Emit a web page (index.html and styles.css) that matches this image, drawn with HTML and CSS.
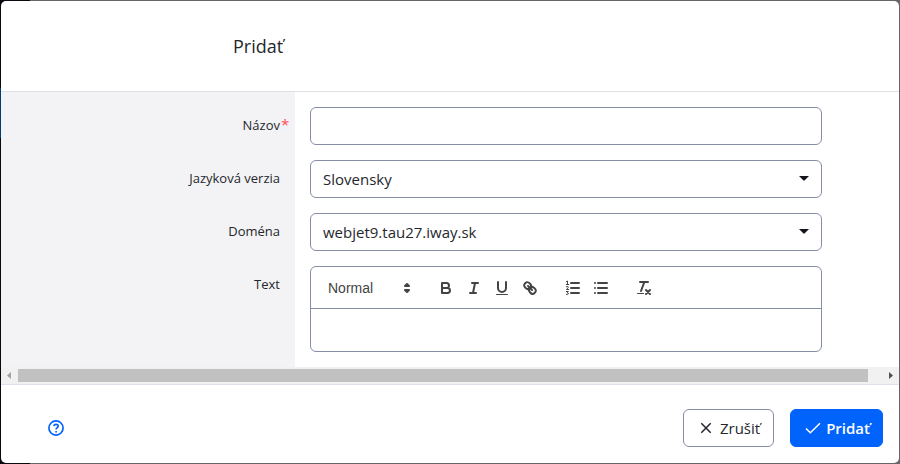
FILE: index.html
```html
<!DOCTYPE html>
<html lang="sk">
<head>
<meta charset="utf-8">
<title>Pridať</title>
<link rel="stylesheet" href="styles.css">
</head>
<body>
<form class="modal">
  <header class="modal-header"><h1>Pridať</h1></header>
  <div class="modal-body">
    <div class="row">
      <div class="label-cell"><label for="name">Názov<span class="required">*</span></label></div>
      <div class="field"><input class="control" id="name" type="text"></div>
    </div>
    <div class="row">
      <div class="label-cell"><label for="language">Jazyková verzia</label></div>
      <div class="field">
        <select class="control" id="language"><option>Slovensky</option></select>
        <svg class="caret" viewBox="0 0 10 5" aria-hidden="true"><path d="M0 0H10L6 4Q5 5 4 4Z"/></svg>
      </div>
    </div>
    <div class="row">
      <div class="label-cell"><label for="domain">Doména</label></div>
      <div class="field">
        <select class="control" id="domain"><option>webjet9.tau27.iway.sk</option></select>
        <svg class="caret" viewBox="0 0 10 5" aria-hidden="true"><path d="M0 0H10L6 4Q5 5 4 4Z"/></svg>
      </div>
    </div>
    <div class="row">
      <div class="label-cell"><label for="text">Text</label></div>
      <div class="field">
        <div class="editor">
          <div class="toolbar">
            <div class="picker">
              <select aria-label="Formát"><option>Normal</option></select>
              <svg class="icon" viewBox="0 0 18 18"><path class="solid" d="M7 11L9 13L11 11ZM7 7L9 5L11 7Z"/></svg>
            </div>
            <div class="group">
              <button type="button" aria-label="Tučné"><svg class="icon" viewBox="0 0 18 18"><path d="M5 4H9.5A2.5 2.5 0 0 1 9.5 9H5ZM5 9H10.5A2.5 2.5 0 0 1 10.5 14H5Z"/></svg></button>
              <button type="button" aria-label="Kurzíva"><svg class="icon" viewBox="0 0 18 18"><path d="M7 4H13M5 14H11M8 14L10 4"/></svg></button>
              <button type="button" aria-label="Podčiarknuté"><svg class="icon" viewBox="0 0 18 18"><path d="M5 3V9A4 4 0 0 0 13 9V3"/><rect class="fill" x="3" y="15" width="12" height="1" rx=".5"/></svg></button>
              <button type="button" aria-label="Odkaz"><svg class="icon" viewBox="0 0 18 18"><path d="M7 7L11 11"/><path d="M8.9 4.577a3.476 3.476 0 0 1 .36 4.679A3.476 3.476 0 0 1 4.577 8.9C3.185 7.5 2.035 6.4 4.217 4.217S7.5 3.185 8.9 4.577Z"/><path d="M13.423 9.1a3.476 3.476 0 0 0-4.679-.36 3.476 3.476 0 0 0 .36 4.679c1.392 1.392 2.5 2.542 4.679.36S14.815 10.5 13.423 9.1Z"/></svg></button>
            </div>
            <div class="group">
              <button type="button" aria-label="Číslovaný zoznam"><svg class="icon" viewBox="0 0 18 18"><path d="M7 4H15M7 9H15M7 14H15"/><path class="thin" d="M2.5 2.5L3.5 2V5.5M2.3 5.5H4.7M2.3 7.7Q4.5 6.8 4.3 8.3L2.5 10.5H4.7M2.4 12.5H4.3L3.4 13.8Q4.6 14 4.3 15Q3.8 15.8 2.4 15.4"/></svg></button>
              <button type="button" aria-label="Zoznam"><svg class="icon" viewBox="0 0 18 18"><path d="M6 4H15M6 9H15M6 14H15M3 4V4M3 9V9M3 14V14"/></svg></button>
            </div>
            <div class="group">
              <button type="button" aria-label="Zrušiť formátovanie"><svg class="icon" viewBox="0 0 18 18"><path d="M5 3H13M6 12L9.35 3M11 11L15 15M15 11L11 15"/><rect class="fill" x="2" y="14" width="7" height="1" rx=".5"/></svg></button>
            </div>
          </div>
          <textarea id="text"></textarea>
        </div>
      </div>
    </div>
  </div>
  <div class="scrollbar" aria-hidden="true">
    <svg viewBox="0 0 17 17"><path class="off" d="M10 5V12L6 8.5Z"/></svg>
    <div class="track"><div class="thumb"></div></div>
    <svg viewBox="0 0 17 17"><path d="M7 5V12L11 8.5Z"/></svg>
  </div>
  <footer class="modal-footer">
    <button class="help" type="button" aria-label="Pomocník"><svg viewBox="0 0 16 16"><circle cx="8" cy="8" r="7.1"/><path d="M5.8 6.2C6.1 4.6 7 4.4 8 4.4C9.3 4.4 10.2 5.1 10.2 6.2C10.2 7.7 8.1 7.7 8.1 9.4M8.1 10.9V12.4"/></svg></button>
    <button class="button" type="button"><svg class="cross" viewBox="0 0 12 12"><path d="M1.3 1.3L10.7 10.7M10.7 1.3L1.3 10.7"/></svg>Zrušiť</button>
    <button class="button primary" type="submit"><svg class="check" viewBox="0 0 16 12"><path d="M1 6.5L5.3 10.8L15 1.2"/></svg>Pridať</button>
  </footer>
</form>
</body>
</html>
```
FILE: styles.css
```css
* { box-sizing: border-box; }

body {
  margin: 0;
  padding: 1px;
  background:
    linear-gradient(#003c78, #003c78) 0 88px / 1px 50px no-repeat,
    linear-gradient(#09090f, #09090f) 0 0 / 30px 100% no-repeat,
    #666;
  color: #25272d;
  font-family: "Open Sans", "Noto Sans", sans-serif;
  font-size: 15px;
}

button, input, select, textarea { font: inherit; color: inherit; }

.modal {
  background: #fff;
  border-radius: 5px;
  overflow: hidden;
}

.modal-header {
  padding: 30px 232px;
  border-bottom: 1px solid #dfe0e5;
}

h1 {
  margin: 0;
  font-size: 18px;
  line-height: 30px;
  font-weight: 400;
}

.modal-body {
  display: flex;
  flex-direction: column;
  gap: 15px;
  padding: 15px 77px 15px 0;
  background: linear-gradient(#f3f3f5, #f3f3f5) 0 0 / 294px 100% no-repeat;
}

.row {
  display: grid;
  grid-template-columns: 294px minmax(0, 1fr);
}

.label-cell {
  padding: 8px 15px;
  text-align: right;
  font-size: 13px;
  line-height: 20px;
}

label { position: relative; }

.required {
  position: absolute;
  left: 100%;
  top: -2px;
  padding-left: 1px;
  font-size: 15px;
  color: #ff4b58;
}

.field {
  position: relative;
  padding-left: 15px;
}

.control {
  display: block;
  width: 100%;
  height: 38px;
  padding: 0 12px;
  border: 1px solid #868ea5;
  border-radius: 6px;
  background: #fff;
  appearance: none;
}

.caret {
  position: absolute;
  right: 13px;
  top: 16px;
  width: 10px;
  height: 5px;
  fill: #13151b;
}

.editor {
  border: 1px solid #868ea5;
  border-radius: 6px;
}

.toolbar {
  display: flex;
  gap: 15px;
  padding: 9px 8px 8px;
  border-bottom: 1px solid #868ea5;
}

.picker {
  display: flex;
  align-items: center;
  width: 98px;
  padding-right: 1px;
  color: #444;
  font-family: "Liberation Sans", sans-serif;
  font-size: 14px;
}

.picker select {
  flex: 1;
  min-width: 0;
  padding: 0 0 0 9px;
  border: 0;
  background: none;
  appearance: none;
}

.group { display: flex; }

.group button {
  width: 28px;
  height: 24px;
  padding: 3px 5px;
  border: 0;
  background: none;
}

.icon {
  display: block;
  width: 18px;
  height: 18px;
  fill: none;
  stroke: #444;
  stroke-width: 2;
  stroke-linecap: round;
  stroke-linejoin: round;
}

.icon .fill { fill: #444; stroke: none; }
.icon .solid { fill: #444; }
.icon .thin { stroke-width: 1; }

textarea {
  display: block;
  width: 100%;
  height: 42px;
  padding: 12px 15px;
  border: 0;
  background: none;
  resize: none;
}

.scrollbar {
  display: flex;
  height: 17px;
  background: #f1f1f1;
}

.scrollbar svg {
  width: 17px;
  height: 17px;
  fill: #505050;
}

.scrollbar .off { fill: #a3a3a3; }

.track {
  flex: 1;
  padding: 2px 0;
}

.thumb {
  width: 98.4%;
  height: 13px;
  background: #c1c1c1;
}

.modal-footer {
  display: flex;
  align-items: center;
  gap: 16px;
  padding: 24px 16px 16px 47px;
  border-top: 1px solid #dfe0e9;
}

.help {
  margin-right: auto;
  padding: 0;
  border: 0;
  background: none;
}

.help svg {
  display: block;
  width: 16px;
  height: 16px;
  fill: none;
  stroke: #0063fb;
  stroke-width: 1.7;
}

.button {
  display: flex;
  align-items: center;
  justify-content: center;
  gap: 8px;
  height: 38px;
  padding: 0 13px 0 16px;
  border: 1px solid #868ea5;
  border-radius: 6px;
  background: #fff;
}

.primary {
  gap: 5px;
  padding: 0 12px 0 14px;
  border-color: #0063fb;
  background: #0063fb;
  color: #fff;
  font-weight: 600;
}

.button svg {
  fill: none;
  stroke: currentColor;
  stroke-width: 1.5;
}

.cross { width: 12px; height: 12px; }
.check { width: 16px; height: 12px; }
```
